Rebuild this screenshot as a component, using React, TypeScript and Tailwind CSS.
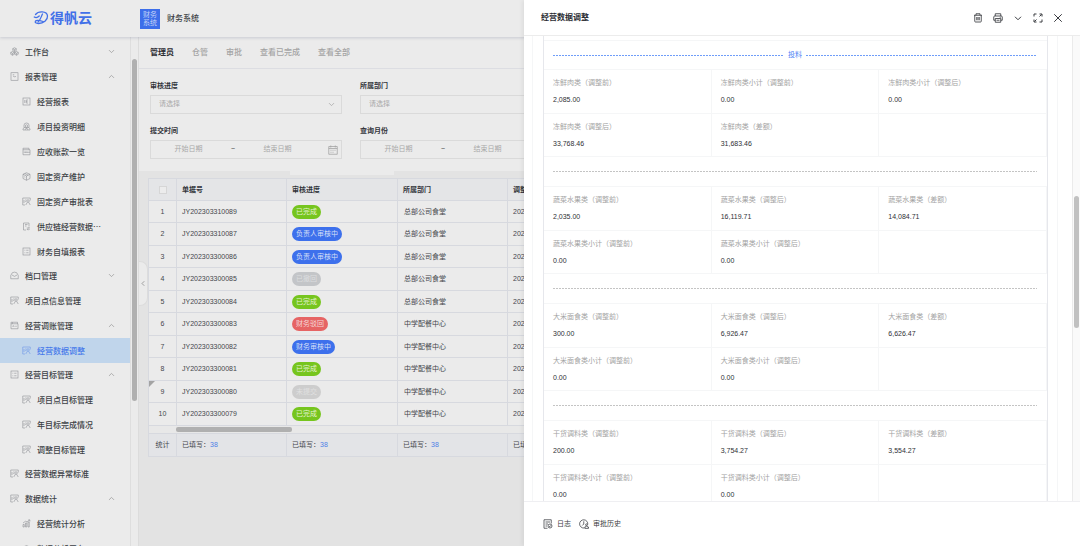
import { ReactNode } from "react";
import { ChevronDown, ChevronLeft, ChevronUp } from "lucide-react";

type IconName =
  | "cubes"
  | "note"
  | "report"
  | "stack"
  | "wallet"
  | "box"
  | "approve"
  | "transfer"
  | "list"
  | "inbox"
  | "card"
  | "chart"
  | "gauge";

const iconShapes: Record<IconName, ReactNode> = {
  cubes: (
    <>
      <path d="M9 1.500l3.500 1.800v3.700L9 9 5.500 7V3.300zM5 9l3.500 1.800v3.700L5 16.500l-3.500-2v-3.700zM13 9l3.500 1.800v3.700l-3.500 2-3.500-2v-3.700z" />
      <path d="M9 5.300V9M5 12.700v3.800M13 12.700v3.800M5.500 3.300l3.500 2 3.500-2M1.500 10.800l3.500 1.900 3.500-1.900M9.500 10.800l3.500 1.900 3.500-1.900" />
    </>
  ),
  note: (
    <>
      <rect x="2" y="1.5" width="14" height="15" />
      <path d="M5.5 5.5h3M6 8l2.5 1.5L12 9" />
    </>
  ),
  report: (
    <>
      <rect x="2" y="2" width="14" height="14" />
      <path d="M5.500 6v6M8.500 6H12M8.500 9H11M8.500 12h3.500M8.500 6v6" />
    </>
  ),
  stack: (
    <>
      <path d="M4 11V6.500a5 4.500 0 0 1 10 0V11M2 14l2-3h10l2 3v2H2z" />
      <circle cx="9" cy="8" r="2.500" />
      <path d="M6 16l1.500-3h3L12 16" />
    </>
  ),
  wallet: (
    <>
      <path d="M2 5.500V2.500h12v3M2 5.500h14V15.500H2z" />
      <path d="M4.500 9v3M7 9v3M9.500 9v3M9.500 10.500H16" />
    </>
  ),
  box: (
    <>
      <path d="M9 1.500l7 3v8.500l-7 3.500-7-3.500V4.500z" />
      <path d="M2 4.500l7 3.500 7-3.500M9 8v8.500M5.500 3l7 3.300M4.500 9.500l2 1" />
    </>
  ),
  approve: (
    <>
      <path d="M6 16H1.500V2h15v5" />
      <path d="M4 6v6M6.500 6H9M6.500 9h1.500" />
      <circle cx="12" cy="8" r="2.500" />
      <path d="M7.500 16l3.300-5.600M16.500 16l-3.300-5.600" />
    </>
  ),
  transfer: (
    <>
      <path d="M8 16H3V2h11v7M6 5h5M6 8h3" />
      <path d="M9.500 12H15l-2-2M15.500 14.500H10l2 2" />
    </>
  ),
  list: (
    <>
      <rect x="2" y="2" width="14" height="14" />
      <path d="M5 6.500h1.500M8.500 6.500H13M5 11.500h1.500M8.500 11.500H13" />
    </>
  ),
  inbox: (
    <>
      <path d="M1.500 9L4.500 3.500q4.500-2.500 9 0L16.500 9v6.500h-15z" />
      <path d="M4 8q5 5.500 10 0" />
    </>
  ),
  card: (
    <>
      <path d="M2 5.500V2.500h13v3M2 5.500h14V15.500H2z" />
      <path d="M4.500 10.500h4l-1.500-1.500M13.500 10.500h-3M5 2.500v3" />
    </>
  ),
  chart: (
    <>
      <path d="M2 16v-5h2.500v5zM7 16V8h2.500v8zM12 16V6h2.500v10z" />
      <path d="M2 8l5-3.500 3 1L15.500 2M12.500 1.800h3.200V5" />
    </>
  ),
  gauge: (
    <>
      <path d="M3 14a7 7 0 1 1 12 0z" />
      <path d="M9 11l3-3" />
    </>
  ),
};

function MenuIcon({ name, className }: { name: IconName; className: string }) {
  return (
    <svg viewBox="0 0 18 18" fill="none" stroke="currentColor" strokeWidth="1.2" className={`size-[9px] shrink-0 ${className}`}>
      {iconShapes[name]}
    </svg>
  );
}

interface MenuItem {
  label: string;
  icon: IconName;
  collapsed?: boolean;
  active?: boolean;
  children?: MenuItem[];
}

const menu: MenuItem[] = [
  { label: "工作台", icon: "cubes", collapsed: true },
  {
    label: "报表管理",
    icon: "note",
    children: [
      { label: "经营报表", icon: "report" },
      { label: "项目投资明细", icon: "stack" },
      { label: "应收账款一览", icon: "wallet" },
      { label: "固定资产维护", icon: "box" },
      { label: "固定资产审批表", icon: "approve" },
      { label: "供应链经营数据…", icon: "transfer" },
      { label: "财务自填报表", icon: "list" },
    ],
  },
  { label: "档口管理", icon: "inbox", collapsed: true },
  { label: "项目点信息管理", icon: "approve" },
  {
    label: "经营调账管理",
    icon: "card",
    children: [{ label: "经营数据调整", icon: "approve", active: true }],
  },
  {
    label: "经营目标管理",
    icon: "list",
    children: [
      { label: "项目点目标管理", icon: "approve" },
      { label: "年目标完成情况", icon: "approve" },
      { label: "调整目标管理", icon: "approve" },
    ],
  },
  { label: "经营数据异常标准", icon: "approve" },
  {
    label: "数据统计",
    icon: "approve",
    children: [
      { label: "经营统计分析", icon: "chart" },
      { label: "数据分析平台", icon: "gauge" },
    ],
  },
];

const tabs = ["管理员", "仓管", "审批", "查看已完成", "查看全部"];

const statusColors: Record<string, string> = {
  已完成: "bg-[#76c51e] text-[#e4f2d4]",
  负责人审核中: "bg-[#3d70ec] text-[#d5dff7]",
  财务审核中: "bg-[#3d70ec] text-[#d5dff7]",
  财务驳回: "bg-[#e66464] text-[#f5d6d6]",
  已撤回: "bg-[#c3c5c8] text-[#dcdddf]",
  未提交: "bg-[#cdcdcd] text-[#e0e0e0]",
};

const rows = [
  { no: "JY202303310089", status: "已完成", dept: "总部公司食堂" },
  { no: "JY202303310087", status: "负责人审核中", dept: "总部公司食堂" },
  { no: "JY202303300086", status: "负责人审核中", dept: "总部公司食堂" },
  { no: "JY202303300085", status: "已撤回", dept: "总部公司食堂" },
  { no: "JY202303300084", status: "已完成", dept: "总部公司食堂" },
  { no: "JY202303300083", status: "财务驳回", dept: "中学配餐中心" },
  { no: "JY202303300082", status: "财务审核中", dept: "中学配餐中心" },
  { no: "JY202303300081", status: "已完成", dept: "中学配餐中心" },
  { no: "JY202303300080", status: "未提交", dept: "中学配餐中心" },
  { no: "JY202303300079", status: "已完成", dept: "中学配餐中心" },
];

type Cell = [string, string] | null;

const sections: Cell[][] = [
  [
    ["冻鲜肉类（调整前）", "2,085.00"],
    ["冻鲜肉类小计（调整前）", "0.00"],
    ["冻鲜肉类小计（调整后）", "0.00"],
    ["冻鲜肉类（调整后）", "33,768.46"],
    ["冻鲜肉类（差额）", "31,683.46"],
    null,
  ],
  [
    ["蔬菜水果类（调整前）", "2,035.00"],
    ["蔬菜水果类（调整后）", "16,119.71"],
    ["蔬菜水果类（差额）", "14,084.71"],
    ["蔬菜水果类小计（调整前）", "0.00"],
    ["蔬菜水果类小计（调整后）", "0.00"],
    null,
  ],
  [
    ["大米面食类（调整前）", "300.00"],
    ["大米面食类（调整后）", "6,926.47"],
    ["大米面食类（差额）", "6,626.47"],
    ["大米面食类小计（调整前）", "0.00"],
    ["大米面食类小计（调整后）", "0.00"],
    null,
  ],
  [
    ["干货调料类（调整前）", "200.00"],
    ["干货调料类（调整后）", "3,754.27"],
    ["干货调料类（差额）", "3,554.27"],
    ["干货调料类小计（调整前）", "0.00"],
    ["干货调料类小计（调整后）", "0.00"],
    null,
  ],
];

function MenuLink({ item, sub }: { item: MenuItem; sub?: boolean }) {
  return (
    <a
      href="#"
      className={`flex h-[25px] items-center gap-[6px] whitespace-nowrap pr-[14px] text-[8px] font-medium ${sub ? "pl-[22px]" : "pl-[10px]"} ${
        item.active ? "bg-[#c0d5eb] text-[#4679ea]" : "text-[#3c3f45]"
      }`}
    >
      <MenuIcon name={item.icon} className={item.active ? "text-[#6f97e8]" : "text-[#8f9196]"} />
      <span className="flex-1">{item.label}</span>
      {item.children && <ChevronUp className="size-[9px] text-[#999]" strokeWidth={2} />}
      {item.collapsed && <ChevronDown className="size-[9px] text-[#999]" strokeWidth={2} />}
    </a>
  );
}

function Sidebar() {
  return (
    <aside className="flex w-[139px] shrink-0 overflow-hidden border-r border-[#dcdcdc] bg-[#ebebeb]">
      <nav className="flex-1 overflow-hidden border-r border-[#dedede] pt-[2px] font-['Noto_Sans_CJK_SC',sans-serif]">
        <ul>
          {menu.map((item) => (
            <li key={item.label}>
              <MenuLink item={item} />
              {item.children && (
                <ul className="-mb-px">
                  {item.children.map((child) => (
                    <li key={child.label}>
                      <MenuLink item={child} sub />
                    </li>
                  ))}
                </ul>
              )}
            </li>
          ))}
        </ul>
      </nav>
      <div className="w-[7px] px-px pt-[22px]">
        <div className="h-[342px] rounded-full bg-[#b0b0b0]" />
      </div>
    </aside>
  );
}

function SelectField({ id, label }: { id: string; label: string }) {
  return (
    <div>
      <label htmlFor={id} className="block text-[7px] font-bold leading-[10px] text-[#33353b]">
        {label}
      </label>
      <div className="mt-[4px] flex h-[19px] items-center border border-[#dadada] px-[5px]">
        <select id={id} className="h-full flex-1 appearance-none bg-transparent pl-[3px] text-[7px] text-[#a9a9a9] outline-none">
          <option>请选择</option>
        </select>
        <ChevronDown className="size-[9px] text-[#a5a5a5]" strokeWidth={2} />
      </div>
    </div>
  );
}

function RangeField({ label }: { label: string }) {
  return (
    <fieldset>
      <legend className="block text-[7px] font-bold leading-[10px] text-[#33353b]">{label}</legend>
      <div className="mt-[4px] flex h-[19px] items-center border border-[#dadada] text-[7px]">
        <input
          aria-label={`${label}开始日期`}
          placeholder="开始日期"
          className="w-0 flex-1 bg-transparent text-center outline-none placeholder:text-[#a9a9a9]"
        />
        <span className="w-[14px] text-center text-[#444]">~</span>
        <input
          aria-label={`${label}结束日期`}
          placeholder="结束日期"
          className="w-0 flex-1 bg-transparent text-center outline-none placeholder:text-[#a9a9a9]"
        />
        <span className="flex w-[26px] justify-end pr-[3px]">
          <svg viewBox="0 0 20 20" fill="none" stroke="#a0a0a0" strokeWidth="1.5" className="size-[10px]">
            <path d="M1.500 3h17v15.500h-17zM1.500 7h17M5.500 1v4M14.500 1v4" />
            <path d="M5 10.500h2M9 10.500h2M13 10.500h2M5 14.500h2M9 14.500h2" />
          </svg>
        </span>
      </div>
    </fieldset>
  );
}

const cellBorder = "border border-[#d7d9df]";

function DataTable() {
  return (
    <table className="w-full table-fixed border-collapse text-[7px] leading-[10px] text-[#45474c]">
      <colgroup>
        <col className="w-[28px]" />
        <col className="w-[110px]" />
        <col className="w-[111px]" />
        <col className="w-[110px]" />
        <col />
      </colgroup>
      <thead>
        <tr className="h-[22px] bg-[#e4e5e7] text-left text-[#33353b]">
          <th className={cellBorder}>
            <input
              type="checkbox"
              aria-label="全选"
              className="mx-auto block size-[8px] appearance-none border border-[#d6d6d6] bg-[#ececec]"
            />
          </th>
          <th className={`${cellBorder} pl-[5px]`}>单据号</th>
          <th className={`${cellBorder} pl-[5px]`}>审核进度</th>
          <th className={`${cellBorder} pl-[5px]`}>所属部门</th>
          <th className={`${cellBorder} pl-[5px]`}>调整月份</th>
        </tr>
      </thead>
      <tbody className="bg-[#ebebeb]">
        {rows.map((row, i) => (
          <tr key={row.no} className="odd:h-[22px] even:h-[23px]">
            <td className={`${cellBorder} relative text-center`}>
              {row.status === "未提交" && (
                <span className="absolute left-0 top-0 size-[6px] bg-[#a3a3a3] [clip-path:polygon(0_0,100%_0,0_100%)]" />
              )}
              {i + 1}
            </td>
            <td className={`${cellBorder} pl-[5px]`}>{row.no}</td>
            <td className={`${cellBorder} pl-[5px]`}>
              <span className={`block h-[14px] w-max rounded-full px-[4px] leading-[14px] ${statusColors[row.status]}`}>{row.status}</span>
            </td>
            <td className={`${cellBorder} pl-[6px]`}>{row.dept}</td>
            <td className={`${cellBorder} pl-[5px]`}>2023-03</td>
          </tr>
        ))}
      </tbody>
      <tfoot>
        <tr className="h-[8px] bg-[#e8e8e8]">
          <td colSpan={5} className={`${cellBorder} pl-[27px]`}>
            <div className="h-[5px] w-[116px] rounded-xs bg-[#b0b0b0]" />
          </td>
        </tr>
        <tr className="h-[23px] bg-[#e3e4e7]">
          <td className={`${cellBorder} text-center`}>统计</td>
          {["no", "status", "dept", "month"].map((key) => (
            <td key={key} className={`${cellBorder} pl-[5px]`}>
              已填写：<span className="text-[#4f7fe6]">38</span>
            </td>
          ))}
        </tr>
      </tfoot>
    </table>
  );
}

const blueDash = "h-px flex-1 bg-[repeating-linear-gradient(to_right,#6f9df9_0_2px,transparent_2px_3px)]";
const grayDash = "h-px flex-1 bg-[repeating-linear-gradient(to_right,#c4c4c4_0_2px,transparent_2px_3px)]";

function Divider({ title }: { title?: string }) {
  if (title) {
    return (
      <div className="flex h-[29px] items-center gap-[4px] border-b border-[#f5f6f7] pl-[9px] pr-[10px] text-[7px] leading-[10px] text-[#4a82f5]">
        <span className={blueDash} />
        {title}
        <span className={blueDash} />
      </div>
    );
  }
  return (
    <div className="flex h-[30px] items-center border-b border-[#f5f6f7] pl-[9px] pr-[10px]">
      <span className={grayDash} />
    </div>
  );
}

function Section({ cells }: { cells: Cell[] }) {
  return (
    <dl className="grid grid-cols-3 grid-rows-[44px_43px] text-[7px] leading-[10px]">
      {cells.map((cell, i) => (
        <div key={i} className="border-b border-r border-[#f5f6f7] pl-[9px] pt-[8px]">
          {cell && (
            <>
              <dt className="text-[#a3a3a3]">{cell[0]}</dt>
              <dd className="mt-[7px] text-[#2f3136]">{cell[1]}</dd>
            </>
          )}
        </div>
      ))}
    </dl>
  );
}

function DrawerTools() {
  const svg = "size-[10px]";
  return (
    <div className="flex items-center gap-[10px] text-[#3a3c41]">
      <button aria-label="删除">
        <svg viewBox="0 0 20 20" fill="none" stroke="currentColor" strokeWidth="1.700" className={svg}>
          <path d="M2 4.500h16M6 4.500V1.500h8v3M3.500 4.500v12q0 1.500 1.500 1.500h10q1.500 0 1.500-1.500v-12M7.500 8v6.500M10 8v6.500M12.500 8v6.500" />
        </svg>
      </button>
      <button aria-label="打印">
        <svg viewBox="0 0 20 20" fill="none" stroke="currentColor" strokeWidth="1.700" className={svg}>
          <path d="M4.500 6V1.500h11V6M4.500 14.500H1.500V8q0-2 2-2h13q2 0 2 2v6.500h-3M4.500 11h11v7.500h-11z" />
          <path d="M13.500 8.500h2M7 14.500h6" />
        </svg>
      </button>
      <button aria-label="更多">
        <svg viewBox="0 0 20 20" fill="none" stroke="currentColor" strokeWidth="2" className={svg}>
          <path d="M4 7.500l6 6 6-6" />
        </svg>
      </button>
      <button aria-label="全屏">
        <svg viewBox="0 0 20 20" fill="none" stroke="currentColor" strokeWidth="2" className={svg}>
          <path d="M2 7V2h5M13 2h5v5M18 13v5h-5M7 18H2v-5M17 3l-4 4M3 17l4-4" />
        </svg>
      </button>
      <button aria-label="关闭">
        <svg viewBox="0 0 20 20" fill="none" stroke="currentColor" strokeWidth="2" className={svg}>
          <path d="M2.500 2.500l15 15M17.500 2.500l-15 15" />
        </svg>
      </button>
    </div>
  );
}

function Drawer() {
  return (
    <section
      aria-label="经营数据调整"
      className="absolute inset-y-0 right-0 z-10 flex w-[556px] flex-col bg-white shadow-[-2px_0_4px_rgba(0,0,0,0.06)]"
    >
      <header className="flex h-[36px] shrink-0 items-center justify-between border-b border-[#ececec] pl-[17px] pr-[17px]">
        <h2 className="text-[8px] font-bold text-[#2b2d33]">经营数据调整</h2>
        <DrawerTools />
      </header>
      <div className="flex min-h-0 flex-1">
        <div className="flex-1 overflow-hidden pl-[8px] pr-[14px]">
          <div className="border-x border-[#f5f6f7] pl-[10px] pr-[9px]">
            <div className="border-x border-[#e6e7ec] pt-[4px]">
              <div className="border-t border-[#f5f6f7]">
                {sections.map((cells, i) => (
                  <div key={i}>
                    <Divider title={i === 0 ? "投料" : undefined} />
                    <Section cells={cells} />
                  </div>
                ))}
              </div>
            </div>
          </div>
        </div>
        <div className="w-[8px] border-l border-[#ebebeb] bg-[#fafafa] px-px pt-[160px]">
          <div className="h-[132px] rounded-full bg-[#c1c1c1]" />
        </div>
      </div>
      <footer className="flex h-[45px] shrink-0 items-center gap-[8px] border-t border-[#efeff2] bg-white pl-[19px] text-[7px] text-[#3a3c41]">
        <button className="flex items-center gap-[4px]">
          <svg viewBox="0 0 20 20" fill="none" stroke="currentColor" strokeWidth="1.500" className="size-[10px]">
            <path d="M9 18.500H2v-17h14.500V9M5 6h9M5 10h5M5 14h3" />
            <circle cx="14" cy="14" r="4" />
            <path d="M12 14l1.500 1.500 2.500-3" />
          </svg>
          日志
        </button>
        <button className="flex items-center gap-[4px]">
          <svg viewBox="0 0 20 20" fill="none" stroke="currentColor" strokeWidth="1.500" className="size-[10px]">
            <path d="M10 18a8.200 8.200 0 1 1 7.500-7M9.500 4.500V10L6.500 13" />
            <circle cx="15" cy="11.500" r="1.800" />
            <path d="M14.300 13.500L13.500 16h-2v2.800h7.500V16h-2l-1-2.500" />
          </svg>
          审批历史
        </button>
      </footer>
    </section>
  );
}

export default function App() {
  return (
    <div className="relative flex h-screen flex-col overflow-hidden bg-[#e3e3e3] font-['Liberation_Sans','Noto_Sans_CJK_SC',sans-serif]">
      <header className="z-1 flex h-[37px] shrink-0 items-center bg-[#ebebeb] shadow-[0_1px_3px_rgba(40,50,90,0.18)]">
        <div className="flex w-[140px] items-center gap-[1px] pb-[2px] pl-[33px] text-[#4270e8]">
          <svg viewBox="0 0 32 32" fill="none" stroke="currentColor" strokeWidth="2.600" strokeLinecap="round" className="size-[16px]">
            <path d="M5 9C10 2 28 1 29 12c.6 8-8 15-18 15-5 0-8-2-6-5 3-3 9-1 15 1" />
            <path d="M19 8c-3 6-4 12-9 16M2.500 14c3 2 7 1 10-2" />
          </svg>
          <span className="text-[14px] font-bold leading-[20px]">得帆云</span>
        </div>
        <div className="flex size-[20px] flex-col items-center justify-center bg-[#3d6eea] text-[7px] leading-[8px] text-[#c3d2f8]">
          <span>财务</span>
          <span>系统</span>
        </div>
        <span className="pl-[7px] text-[8px] font-medium text-[#3c3f45]">财务系统</span>
      </header>
      <div className="flex min-h-0 flex-1">
        <Sidebar />
        <main className="relative min-w-0 flex-1">
          <div className="bg-[#ebebeb]">
            <div role="tablist" className="flex h-[32px] items-center gap-[18px] border-b border-[#dcdde2] pl-[11px] text-[8px] font-medium">
              {tabs.map((tab, i) => (
                <button
                  key={tab}
                  role="tab"
                  aria-selected={i === 0}
                  className={i === 0 ? "font-bold text-[#2b2d33]" : "text-[#a3a3a3]"}
                >
                  {tab}
                </button>
              ))}
            </div>
            <form className="grid grid-cols-4 gap-x-[18px] gap-y-[12px] pb-[12px] pl-[11px] pr-[108px] pt-[12px]">
              <div className="col-start-1">
                <SelectField id="progress" label="审核进度" />
              </div>
              <SelectField id="dept" label="所属部门" />
              <div className="col-start-1">
                <RangeField label="提交时间" />
              </div>
              <RangeField label="查询月份" />
            </form>
          </div>
          <div className="ml-[151px] h-[4px] w-[104px] bg-[#ebebeb]" />
          <div className="pl-[9px] pr-[9px] pt-[3px]">
            <DataTable />
          </div>
          <button
            aria-label="收起菜单"
            className="absolute left-0 top-[224px] flex h-[45px] w-[9px] items-center justify-center rounded-r-[8px] border border-l-0 border-[#dcdcdc] bg-[#ebebeb] text-[#777]"
          >
            <ChevronLeft className="size-[9px]" strokeWidth={2} />
          </button>
        </main>
      </div>
      <Drawer />
    </div>
  );
}
